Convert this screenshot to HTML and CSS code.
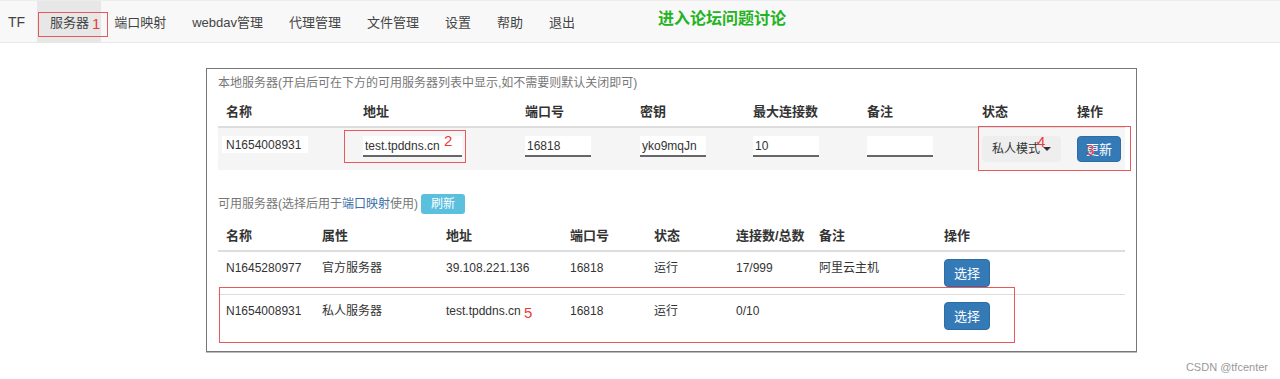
FILE: index.html
```html
<!DOCTYPE html>
<html lang="zh-CN">
<head>
  <meta charset="UTF-8">
  <title>TF 服务器</title>
  <link rel="stylesheet" href="styles.css">
</head>
<body>
  <nav class="topnav">
    <span class="brand">TF</span>
    <a class="nav-link active">服务器</a>
    <a class="nav-link">端口映射</a>
    <a class="nav-link">webdav管理</a>
    <a class="nav-link">代理管理</a>
    <a class="nav-link">文件管理</a>
    <a class="nav-link">设置</a>
    <a class="nav-link">帮助</a>
    <a class="nav-link">退出</a>
    <a class="forum-link">进入论坛问题讨论</a>
  </nav>

  <div class="panel">
    <div class="caption">本地服务器(开启后可在下方的可用服务器列表中显示,如不需要则默认关闭即可)</div>
    <table class="grid local-grid">
      <colgroup>
        <col style="width:137px"><col style="width:162px"><col style="width:115px"><col style="width:113px">
        <col style="width:114px"><col style="width:115px"><col style="width:95px"><col style="width:56px">
      </colgroup>
      <thead>
        <tr><th>名称</th><th>地址</th><th>端口号</th><th>密钥</th><th>最大连接数</th><th>备注</th><th>状态</th><th>操作</th></tr>
      </thead>
      <tbody>
        <tr class="shaded">
          <td><input class="field field-name" value="N1654008931" readonly></td>
          <td><input class="field field-wide" value="test.tpddns.cn"></td>
          <td><input class="field" value="16818"></td>
          <td><input class="field" value="yko9mqJn"></td>
          <td><input class="field" value="10"></td>
          <td><input class="field" value=""></td>
          <td><span class="btn-select">私人模式<span class="caret"></span></span></td>
          <td><span class="btn btn-primary">更新</span></td>
        </tr>
      </tbody>
    </table>

    <div class="caption caption-second">
      可用服务器(选择后用于<a class="link">端口映射</a>使用)
      <span class="btn-refresh">刷新</span>
    </div>
    <table class="grid remote-grid">
      <colgroup>
        <col style="width:96px"><col style="width:124px"><col style="width:124px"><col style="width:84px">
        <col style="width:82px"><col style="width:83px"><col style="width:125px"><col style="width:189px">
      </colgroup>
      <thead>
        <tr><th>名称</th><th>属性</th><th>地址</th><th>端口号</th><th>状态</th><th>连接数/总数</th><th>备注</th><th>操作</th></tr>
      </thead>
      <tbody>
        <tr>
          <td>N1645280977</td><td>官方服务器</td><td>39.108.221.136</td><td>16818</td>
          <td>运行</td><td>17/999</td><td>阿里云主机</td>
          <td><span class="btn btn-primary btn-choose">选择</span></td>
        </tr>
        <tr>
          <td>N1654008931</td><td>私人服务器</td><td>test.tpddns.cn</td><td>16818</td>
          <td>运行</td><td>0/10</td><td></td>
          <td><span class="btn btn-primary btn-choose">选择</span></td>
        </tr>
      </tbody>
    </table>
  </div>

  <div class="watermark">CSDN @tfcenter</div>

  <!-- annotation marks drawn over the screenshot -->
  <div class="mark-box mark-box-1"></div>
  <span class="mark-num mark-num-1">1</span>
  <div class="mark-box mark-box-2"></div>
  <span class="mark-num mark-num-2">2</span>
  <div class="mark-box mark-box-4"></div>
  <span class="mark-num mark-num-4">4</span>
  <span class="mark-num mark-num-3">3</span>
  <div class="mark-box mark-box-5"></div>
  <span class="mark-num mark-num-5">5</span>
</body>
</html>
```

FILE: styles.css
```css
html, body {
  margin: 0;
  padding: 0;
  background: #fff;
  color: #333;
  font-family: "Liberation Sans", "Noto Sans CJK SC", sans-serif;
}
body {
  position: relative;
  width: 1280px;
  height: 379px;
  overflow: hidden;
}

/* top navigation */
.topnav {
  display: flex;
  align-items: stretch;
  height: 41px;
  background: #f8f8f8;
  border-top: 1px solid #ececec;
  border-bottom: 1px solid #e7e7e7;
}
.brand {
  display: flex;
  align-items: center;
  padding: 0 12px 0 8px;
  font-size: 14px;
  color: #444;
}
.nav-link {
  display: flex;
  align-items: center;
  padding: 0 13px;
  font-size: 13px;
  color: #444;
  text-decoration: none;
}
.nav-link.active {
  background: #e7e7e7;
  padding-right: 12px;
}
.forum-link {
  align-self: flex-start;
  margin-left: 70px;
  padding-top: 4px;
  font-size: 16px;
  font-weight: 700;
  color: #22b322;
}

/* main panel */
.panel {
  width: 907px;
  margin: 25px 0 0 206px;
  padding: 4px 11px 14px 11px;
  border: 1px solid #777;
  box-shadow: 0 1px 0 #bbb;
}
.caption {
  font-size: 12px;
  line-height: 20px;
  color: #777;
  margin-bottom: 3px;
}
.caption-second {
  display: flex;
  align-items: center;
  margin-top: 24px;
  margin-bottom: 6px;
}
.link {
  color: #3a6ea5;
}
.btn-refresh {
  display: inline-flex;
  align-items: center;
  height: 20px;
  padding: 0 10px;
  margin-left: 3px;
  background: #5bc0de;
  color: #fff;
  border-radius: 3px;
  font-size: 12px;
}

/* tables */
.grid {
  width: 907px;
  table-layout: fixed;
  border-collapse: collapse;
}
.grid th {
  text-align: left;
  font-size: 13px;
  font-weight: 700;
  line-height: 18px;
  padding: 7px 8px 5px;
  border-bottom: 2px solid #ddd;
  white-space: nowrap;
}
.grid td {
  font-size: 12px;
  line-height: 19px;
  padding: 7px 8px;
  vertical-align: top;
  white-space: nowrap;
}
.local-grid td {
  padding: 8px;
  line-height: 17px;
}
.remote-grid tbody tr + tr td {
  border-top: 1px solid #ddd;
}
.shaded td {
  background: #f5f5f5;
}

.field {
  box-sizing: border-box;
  width: 66px;
  height: 21px;
  padding: 0 2px;
  border: none;
  border-bottom: 2px solid #666;
  background: #fff;
  font: 12px "Liberation Sans", "Noto Sans CJK SC", sans-serif;
  color: #333;
  outline: none;
}
.field-wide {
  width: 99px;
}
.field-name {
  width: 86px;
  height: 17px;
  margin-left: -4px;
  padding: 0 4px;
  border-bottom: none;
}

.btn-select {
  display: inline-flex;
  align-items: center;
  height: 26px;
  padding: 0 10px;
  background: #eee;
  border-radius: 4px;
  font-size: 12px;
  color: #333;
}
.caret {
  display: inline-block;
  margin-left: 3px;
  border-top: 4px solid #333;
  border-left: 4px solid transparent;
  border-right: 4px solid transparent;
}
.btn {
  display: inline-flex;
  align-items: center;
  justify-content: center;
  box-sizing: border-box;
  height: 26px;
  padding: 0 8px;
  border-radius: 4px;
  font-size: 13px;
  color: #fff;
}
.btn-primary {
  background: #337ab7;
  border: 1px solid #2e6da4;
}
.btn-choose {
  height: 28px;
  padding: 0 9px;
}

.watermark {
  margin-top: 8px;
  padding-right: 12px;
  text-align: right;
  font-size: 11px;
  line-height: 14px;
  color: #999;
}

/* red annotation marks */
.mark-box {
  position: absolute;
  border: 1px solid #e8585d;
  box-sizing: border-box;
  pointer-events: none;
}
.mark-box-1 { left: 38px; top: 12px; width: 70px; height: 25px; }
.mark-box-2 { left: 344px; top: 130px; width: 122px; height: 33px; }
.mark-box-4 { left: 978px; top: 126px; width: 153px; height: 45px; }
.mark-box-5 { left: 219px; top: 287px; width: 796px; height: 56px; }
.mark-num {
  position: absolute;
  font-size: 15px;
  line-height: 16px;
  color: #f03a3a;
}
.mark-num-1 { left: 92px; top: 16px; }
.mark-num-2 { left: 444px; top: 133px; }
.mark-num-4 { left: 1037px; top: 134px; }
.mark-num-3 { left: 1086px; top: 142px; }
.mark-num-5 { left: 524px; top: 305px; }
```
